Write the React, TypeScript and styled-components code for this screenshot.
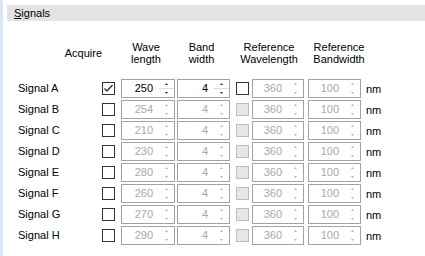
import React from 'react';
import styled, { createGlobalStyle } from 'styled-components';

const GlobalStyle = createGlobalStyle`
    html, body {
        margin: 0;
        padding: 0;
        background: #ffffff;
    }
    body {
        font-family: "Liberation Sans", Arial, sans-serif;
        font-size: 11px;
        color: #000000;
    }
`;

interface SignalRow {
    name: string;
    wave: number;
    band: number;
    acquire: boolean;
}

const signals: SignalRow[] = [
    { name: 'Signal A', wave: 250, band: 4, acquire: true },
    { name: 'Signal B', wave: 254, band: 4, acquire: false },
    { name: 'Signal C', wave: 210, band: 4, acquire: false },
    { name: 'Signal D', wave: 230, band: 4, acquire: false },
    { name: 'Signal E', wave: 280, band: 4, acquire: false },
    { name: 'Signal F', wave: 260, band: 4, acquire: false },
    { name: 'Signal G', wave: 270, band: 4, acquire: false },
    { name: 'Signal H', wave: 290, band: 4, acquire: false },
];

const Page = styled.div`
    display: flex;
    width: 425px;
    height: 256px;
    overflow: hidden;
`;

const SideStrip = styled.div`
    width: 3px;
    flex: none;
    background: #dae6f5;
`;

const Main = styled.div`
    flex: 1;
    padding: 5px 0 0 4px;
`;

const SectionBar = styled.div`
    height: 16px;
    line-height: 16px;
    padding-left: 7px;
    background: #e3e3e3;
    color: #000000;
`;

const Mnemonic = styled.span`
    text-decoration: underline;
`;

// header row is 24px of text plus the space down to the first row
const Grid = styled.div`
    display: grid;
    grid-template-columns: 84px 19px 56px 59px 16px 56px 58px auto;
    grid-template-rows: 36px;
    grid-auto-rows: 19px;
    row-gap: 2px;
    align-items: center;
    padding-left: 11px;
    margin-top: 20px;
`;

const HeaderRow = styled.div`
    display: contents;
`;

const HeaderCell = styled.div<{ $col: string; $width: number; $shift?: number }>`
    grid-column: ${p => p.$col};
    grid-row: 1;
    align-self: start;
    width: ${p => p.$width}px;
    height: 24px;
    text-align: center;
    line-height: 12px;
    transform: translateX(${p => p.$shift || 0}px);
`;

const AcquireHeader = styled.div`
    grid-column: 1;
    grid-row: 1;
    align-self: start;
    justify-self: end;
    height: 24px;
    line-height: 25px;
`;

const Label = styled.div`
    grid-column: 1;
    line-height: 19px;
`;

const Unit = styled.div`
    grid-column: 8;
    line-height: 19px;
    padding-top: 2px;
`;

const Box = styled.div<{ $col: number; $disabled?: boolean }>`
    grid-column: ${p => p.$col};
    width: 11px;
    height: 11px;
    border: 1px solid ${p => (p.$disabled ? '#bcbcbc' : '#333333')};
    background: ${p => (p.$disabled ? '#e6e6e6' : '#ffffff')};
    display: flex;
    align-items: center;
    justify-content: center;
`;

const SpinBox = styled.div<{ $col: number; $width: number }>`
    grid-column: ${p => p.$col};
    width: ${p => p.$width - 2}px;
    height: 17px;
    border: 1px solid #a2a2a2;
    background: #ffffff;
    display: flex;
`;

const SpinValue = styled.div<{ $disabled?: boolean }>`
    flex: 1;
    text-align: right;
    padding-right: 6px;
    line-height: 17px;
    color: ${p => (p.$disabled ? '#a3a9b3' : '#000000')};
`;

const SpinButtons = styled.div`
    width: 15px;
    display: flex;
    flex-direction: column;
`;

const SpinHalf = styled.div<{ $divider?: boolean }>`
    flex: 1;
    display: flex;
    align-items: center;
    justify-content: center;
    padding-right: 1px;
    border-bottom: 1px solid ${p => (p.$divider ? '#dcdcdc' : 'transparent')};
    &:last-child {
        border-bottom: none;
    }
`;

const CheckBox = ({ col, checked, disabled }: { col: number; checked?: boolean; disabled?: boolean }) => (
    <Box $col={col} $disabled={disabled}>
        {checked && (
            <svg width="11" height="11" viewBox="0 0 11 11">
                <path d="M1.5 5.5 L4 8 L9.5 2" fill="none" stroke="#333333" strokeWidth="1.4" />
            </svg>
        )}
    </Box>
);

const Spinner = ({ col, width, value, disabled }: { col: number; width: number; value: number; disabled?: boolean }) => {
    const arrow = disabled ? '#b4b4b4' : '#333333';
    return (
        <SpinBox $col={col} $width={width}>
            <SpinValue $disabled={disabled}>{value}</SpinValue>
            <SpinButtons>
                <SpinHalf $divider={!disabled}>
                    <svg width="3" height="2" viewBox="0 0 3 2">
                        <polygon points="0,2 1.5,0 3,2" fill={arrow} />
                    </svg>
                </SpinHalf>
                <SpinHalf>
                    <svg width="3" height="2" viewBox="0 0 3 2">
                        <polygon points="0,0 3,0 1.5,2" fill={arrow} />
                    </svg>
                </SpinHalf>
            </SpinButtons>
        </SpinBox>
    );
};

export default function App() {
    return (
        <Page>
            <GlobalStyle />
            <SideStrip />
            <Main>
                <SectionBar>
                    <Mnemonic>S</Mnemonic>ignals
                </SectionBar>
                <Grid>
                    <HeaderRow>
                        <AcquireHeader>Acquire</AcquireHeader>
                        <HeaderCell $col="3" $width={54} $shift={-2}>
                            Wave<br />length
                        </HeaderCell>
                        <HeaderCell $col="4" $width={53} $shift={-2}>
                            Band<br />width
                        </HeaderCell>
                        <HeaderCell $col="5 / 7" $width={68} $shift={-1}>
                            Reference<br />Wavelength
                        </HeaderCell>
                        <HeaderCell $col="7" $width={58} $shift={2}>
                            Reference<br />Bandwidth
                        </HeaderCell>
                    </HeaderRow>
                    {signals.map(s => (
                        <React.Fragment key={s.name}>
                            <Label>{s.name}</Label>
                            <CheckBox col={2} checked={s.acquire} />
                            <Spinner col={3} width={54} value={s.wave} disabled={!s.acquire} />
                            <Spinner col={4} width={53} value={s.band} disabled={!s.acquire} />
                            <CheckBox col={5} disabled={!s.acquire} />
                            <Spinner col={6} width={52} value={360} disabled />
                            <Spinner col={7} width={53} value={100} disabled />
                            <Unit>nm</Unit>
                        </React.Fragment>
                    ))}
                </Grid>
            </Main>
        </Page>
    );
}
